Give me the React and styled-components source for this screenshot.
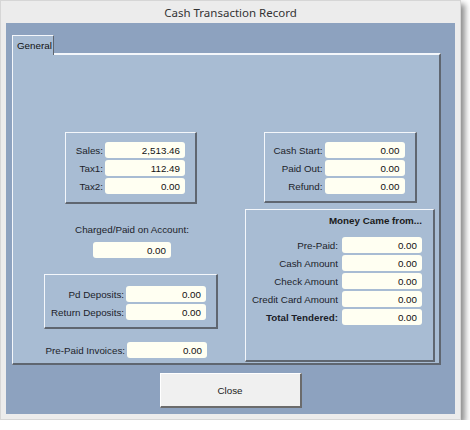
import React from "react";
import styled, { createGlobalStyle } from "styled-components";

const GlobalStyle = createGlobalStyle`
	html, body {
		margin: 0;
		padding: 0;
		background: #ffffff;
	}
	body {
		font-family: "Liberation Sans", Arial, sans-serif;
	}
`;

const Window = styled.div`
	width: 461px;
	height: 420px;
	box-sizing: border-box;
	background: #ececec;
	border: 1px solid #d6d6d6;
	box-shadow: 4px 4px 6px rgba(0, 0, 0, 0.45);
	display: flex;
	flex-direction: column;
	padding: 0 5px 5px 5px;
`;

const TitleBar = styled.div`
	height: 22px;
	display: flex;
	align-items: center;
	justify-content: center;
	font-family: "Noto Sans", "Open Sans", sans-serif;
	font-size: 11.5px;
	color: #333;
`;

const Client = styled.div`
	flex: 1;
	background: #8da2bf;
	padding: 12px 14px 6px 6px;
	display: flex;
	flex-direction: column;
`;

const TabStrip = styled.div`
	display: flex;
	height: 18px;
`;

const Tab = styled.div`
	width: 42px;
	box-sizing: border-box;
	background: #a8bcd3;
	border-top: 1px solid #f4f7fb;
	border-left: 1px solid #f4f7fb;
	border-right: 1px solid #5f6670;
	font-size: 9.8px;
	color: #111;
	padding: 4px 0 0 4px;
	position: relative;
	z-index: 1;
	margin-bottom: -2px;
	height: 20px;
`;

const Panel = styled.div`
	height: 312px;
	box-sizing: border-box;
	background: #a8bcd3;
	border-top: 2px solid #f4f7fb;
	border-left: 1px solid #f4f7fb;
	border-right: 2px solid #5f6670;
	border-bottom: 2px solid #5f6670;
	padding: 77px 0 0 31px;
	display: flex;
	gap: 27px;
`;

const Column = styled.div`
	width: ${(p) => p.$width}px;
	display: flex;
	flex-direction: column;
	align-items: center;
`;

const Group = styled.div`
	width: ${(p) => p.$width}px;
	height: ${(p) => p.$height}px;
	box-sizing: border-box;
	border-top: 1px solid #f4f7fb;
	border-left: 1px solid #f4f7fb;
	border-right: 2px solid #5f6670;
	border-bottom: 2px solid #5f6670;
	padding: ${(p) => p.$pad || "9px 10px 0 0"};
	display: flex;
	flex-direction: column;
	gap: 2px;
	margin-top: ${(p) => p.$mt || 0}px;
`;

const GroupTitle = styled.div`
	text-align: right;
	font-size: 9.8px;
	font-weight: bold;
	color: #1a1a1a;
	height: 15px;
	margin-bottom: 5px;
`;

const Row = styled.div`
	display: flex;
	justify-content: flex-end;
	align-items: center;
	gap: ${(p) => p.$gap || 2}px;
	height: 16px;
	margin-top: ${(p) => p.$mt || 0}px;
`;

const InvoiceRow = styled(Row)`
	align-self: flex-start;
	width: 163px;
`;

const Label = styled.label`
	font-size: 9.8px;
	color: #1c1e2a;
	font-weight: ${(p) => (p.$bold ? "bold" : "normal")};
	white-space: nowrap;
`;

const Value = styled.div`
	width: 80px;
	height: 16px;
	box-sizing: border-box;
	background: #fffff2;
	border-radius: 3px;
	font-size: 9.8px;
	color: #111;
	text-align: right;
	padding: 3px 5px 0 0;
`;

const CenterLabel = styled.div`
	font-size: 9.8px;
	color: #1c1e2a;
	margin-top: 20px;
	margin-left: 2px;
`;

const CenterValue = styled(Value)`
	margin-top: 7px;
	margin-left: 2px;
	width: 78px;
`;

const Footer = styled.div`
	display: flex;
	justify-content: center;
	padding-top: 8px;
	padding-left: 8px;
`;

const Button = styled.button`
	width: 142px;
	height: 35px;
	box-sizing: border-box;
	background: #f0f0f0;
	border: none;
	border-top: 1px solid #ffffff;
	border-left: 1px solid #ffffff;
	border-right: 2px solid #6b6b6b;
	border-bottom: 2px solid #6b6b6b;
	font-family: "Liberation Sans", Arial, sans-serif;
	font-size: 9.8px;
	color: #1a1a1a;
	padding: 0;
`;

const Field = ({ label, value, bold, gap }) => (
	<Row $gap={gap}>
		<Label $bold={bold}>{label}</Label>
		<Value>{value}</Value>
	</Row>
);

const App = () => {
	return (
		<>
			<GlobalStyle />
			<Window>
				<TitleBar>Cash Transaction Record</TitleBar>
				<Client>
					<TabStrip>
						<Tab>General</Tab>
					</TabStrip>
					<Panel>
						<Column $width={174}>
							<Group $width={132} $height={72}>
								<Field label='Sales:' value='2,513.46' />
								<Field label='Tax1:' value='112.49' />
								<Field label='Tax2:' value='0.00' />
							</Group>
							<CenterLabel>Charged/Paid on Account:</CenterLabel>
							<CenterValue>0.00</CenterValue>
							<Group $width={174} $height={55} $mt={16} $pad='11px 10px 0 0'>
								<Field label='Pd Deposits:' value='0.00' />
								<Field label='Return Deposits:' value='0.00' />
							</Group>
							<InvoiceRow $mt={13}>
								<Label>Pre-Paid Invoices:</Label>
								<Value>0.00</Value>
							</InvoiceRow>
						</Column>
						<Column $width={190}>
							<Group $width={153} $height={71} $pad='9px 10px 0 0'>
								<Field label='Cash Start:' value='0.00' />
								<Field label='Paid Out:' value='0.00' />
								<Field label='Refund:' value='0.00' />
							</Group>
							<Group $width={190} $height={153} $mt={6} $pad='5px 11px 0 0'>
								<GroupTitle>Money Came from...</GroupTitle>
								<Field gap={4} label='Pre-Paid:' value='0.00' />
								<Field gap={4} label='Cash Amount' value='0.00' />
								<Field gap={4} label='Check Amount' value='0.00' />
								<Field gap={4} label='Credit Card Amount' value='0.00' />
								<Field gap={4} bold label='Total Tendered:' value='0.00' />
							</Group>
						</Column>
					</Panel>
					<Footer>
						<Button>Close</Button>
					</Footer>
				</Client>
			</Window>
		</>
	);
};

export default App;
